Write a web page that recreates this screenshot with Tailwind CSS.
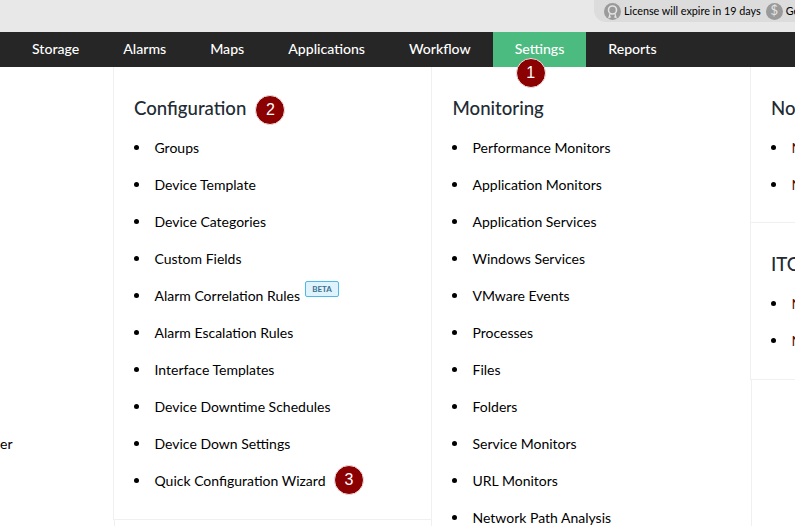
<!DOCTYPE html>
<html>
<head>
<meta charset="utf-8">
<script src="https://cdn.jsdelivr.net/npm/@tailwindcss/browser@4"></script>
</head>
<body class="w-[795px] h-[526px] overflow-hidden bg-white font-['Lato','Liberation_Sans',sans-serif]">
<header class="h-8 bg-[#e8e8e8] flex justify-start pl-[594px] overflow-hidden">
  <div class="h-[22px] w-[300px] shrink-0 rounded-bl-[12px] bg-[#dcdcdc] flex items-center pl-[10px] text-[10.8px] text-black whitespace-nowrap">
    <svg class="w-[17px] h-[17px] shrink-0" viewBox="0 0 17 17"><circle cx="8.5" cy="8.5" r="8.5" fill="#9a9a9a"/><circle cx="8.5" cy="7" r="4" fill="none" stroke="#e4e4e4" stroke-width="1.6"/><path d="M6 11l-1 3.5 2-.8M11 11l1 3.5-2-.8" fill="none" stroke="#e4e4e4" stroke-width="1.2"/></svg>
    <span class="ml-[3px]">License will expire in 19 days</span>
    <span class="ml-[5px] w-[17px] h-[17px] shrink-0 rounded-full bg-[#9a9a9a] text-[#e4e4e4] text-[13px] flex items-center justify-center">$</span>
    <span class="ml-[3px]">Get Quote</span>
  </div>
</header>
<nav class="relative h-[35px] bg-[#262626] flex items-stretch pl-[10px] text-[14.1px] font-medium text-white">
  <a class="px-[22px] flex items-center pb-[2px]">Storage</a>
  <a class="px-[22px] flex items-center pb-[2px]">Alarms</a>
  <a class="px-[22px] flex items-center pb-[2px]">Maps</a>
  <a class="px-[22px] flex items-center pb-[2px]">Applications</a>
  <a class="px-[22px] flex items-center pb-[2px]">Workflow</a>
  <a class="relative px-[22px] flex items-center pb-[2px] bg-[#4cbb7f]">Settings
    <span class="absolute left-[23px] top-[26px] w-[30px] h-[30px] rounded-full bg-[#8b0000] border border-[#f0e4e4] flex items-center justify-center font-['Liberation_Sans',sans-serif] text-[16px] font-normal text-white">1</span>
  </a>
  <a class="px-[22px] flex items-center pb-[2px]">Reports</a>
</nav>
<main class="flex h-[459px] overflow-hidden text-[14px] text-black">
  <section class="w-[113px] shrink-0 overflow-hidden pt-[367px] text-[14px]">
    <p class="leading-[20px]">er</p>
  </section>
  <div class="w-[318px] shrink-0 flex flex-col">
    <section class="h-[453px] shrink-0 border-l border-b border-[#f0f0f0]">
      <div class="flex items-center pl-[20px] pt-[20px] h-[62px]">
        <h2 class="text-[18.6px] font-medium text-[#222b33] leading-[26px]">Configuration</h2>
        <span class="ml-[9px] mt-[3px] w-[30px] h-[30px] rounded-full bg-[#8b0000] border border-[#f0e4e4] flex items-center justify-center font-['Liberation_Sans',sans-serif] text-[16px] text-white">2</span>
      </div>
      <ul class="pl-[20px] flex flex-col">
        <li class="h-[37px] flex items-center"><i class="w-[5px] h-[5px] shrink-0 rounded-full bg-black mr-[15.5px]"></i>Groups</li>
        <li class="h-[37px] flex items-center"><i class="w-[5px] h-[5px] shrink-0 rounded-full bg-black mr-[15.5px]"></i>Device Template</li>
        <li class="h-[37px] flex items-center"><i class="w-[5px] h-[5px] shrink-0 rounded-full bg-black mr-[15.5px]"></i>Device Categories</li>
        <li class="h-[37px] flex items-center"><i class="w-[5px] h-[5px] shrink-0 rounded-full bg-black mr-[15.5px]"></i>Custom Fields</li>
        <li class="h-[37px] flex items-center"><i class="w-[5px] h-[5px] shrink-0 rounded-full bg-black mr-[15.5px]"></i>Alarm Correlation Rules<span class="ml-[5px] mb-[13px] w-[34px] h-[16px] rounded-[2px] bg-[#dff3fc] border border-[#4db8ea] flex items-center justify-center text-[8px] font-bold text-[#3a6f8c]">BETA</span></li>
        <li class="h-[37px] flex items-center"><i class="w-[5px] h-[5px] shrink-0 rounded-full bg-black mr-[15.5px]"></i>Alarm Escalation Rules</li>
        <li class="h-[37px] flex items-center"><i class="w-[5px] h-[5px] shrink-0 rounded-full bg-black mr-[15.5px]"></i>Interface Templates</li>
        <li class="h-[37px] flex items-center"><i class="w-[5px] h-[5px] shrink-0 rounded-full bg-black mr-[15.5px]"></i>Device Downtime Schedules</li>
        <li class="h-[37px] flex items-center"><i class="w-[5px] h-[5px] shrink-0 rounded-full bg-black mr-[15.5px]"></i>Device Down Settings</li>
        <li class="h-[37px] flex items-center"><i class="w-[5px] h-[5px] shrink-0 rounded-full bg-black mr-[15.5px]"></i>Quick Configuration Wizard<span class="ml-[8.5px] mt-[-2px] w-[30px] h-[30px] rounded-full bg-[#8b0000] border border-[#f0e4e4] flex items-center justify-center font-['Liberation_Sans',sans-serif] text-[16px] text-white">3</span></li>
      </ul>
    </section>
    <div class="flex-1 ml-[1px] border-l border-[#f0f0f0]"></div>
  </div>
  <section class="w-[319px] shrink-0 border-l border-[#f0f0f0]">
    <div class="flex items-center pl-[20.5px] pt-[20px] h-[62px]">
      <h2 class="text-[18.6px] font-medium text-[#222b33] leading-[26px]">Monitoring</h2>
    </div>
    <ul class="pl-[20px] flex flex-col">
      <li class="h-[37px] flex items-center"><i class="w-[5px] h-[5px] shrink-0 rounded-full bg-black mr-[15.5px]"></i>Performance Monitors</li>
      <li class="h-[37px] flex items-center"><i class="w-[5px] h-[5px] shrink-0 rounded-full bg-black mr-[15.5px]"></i>Application Monitors</li>
      <li class="h-[37px] flex items-center"><i class="w-[5px] h-[5px] shrink-0 rounded-full bg-black mr-[15.5px]"></i>Application Services</li>
      <li class="h-[37px] flex items-center"><i class="w-[5px] h-[5px] shrink-0 rounded-full bg-black mr-[15.5px]"></i>Windows Services</li>
      <li class="h-[37px] flex items-center"><i class="w-[5px] h-[5px] shrink-0 rounded-full bg-black mr-[15.5px]"></i>VMware Events</li>
      <li class="h-[37px] flex items-center"><i class="w-[5px] h-[5px] shrink-0 rounded-full bg-black mr-[15.5px]"></i>Processes</li>
      <li class="h-[37px] flex items-center"><i class="w-[5px] h-[5px] shrink-0 rounded-full bg-black mr-[15.5px]"></i>Files</li>
      <li class="h-[37px] flex items-center"><i class="w-[5px] h-[5px] shrink-0 rounded-full bg-black mr-[15.5px]"></i>Folders</li>
      <li class="h-[37px] flex items-center"><i class="w-[5px] h-[5px] shrink-0 rounded-full bg-black mr-[15.5px]"></i>Service Monitors</li>
      <li class="h-[37px] flex items-center"><i class="w-[5px] h-[5px] shrink-0 rounded-full bg-black mr-[15.5px]"></i>URL Monitors</li>
      <li class="h-[37px] flex items-center"><i class="w-[5px] h-[5px] shrink-0 rounded-full bg-black mr-[15.5px]"></i>Network Path Analysis</li>
    </ul>
  </section>
  <div class="flex-1 min-w-0 flex flex-col">
    <section class="h-[313px] shrink-0 overflow-hidden border-l border-b border-[#f0f0f0]">
      <div class="h-[156px] border-b border-[#f0f0f0]">
        <div class="flex items-center pl-[20px] pt-[20px] h-[62px]">
          <h2 class="text-[18.6px] font-medium text-[#222b33] leading-[26px] whitespace-nowrap">Notification</h2>
        </div>
        <ul class="pl-[20px] flex flex-col text-[#5a0a0a]">
          <li class="h-[37px] flex items-center whitespace-nowrap"><i class="w-[5px] h-[5px] shrink-0 rounded-full bg-black mr-[15.5px]"></i>N</li>
          <li class="h-[37px] flex items-center whitespace-nowrap"><i class="w-[5px] h-[5px] shrink-0 rounded-full bg-black mr-[15.5px]"></i>N</li>
        </ul>
      </div>
      <div>
        <div class="flex items-center pl-[20px] pt-[20px] h-[62px]">
          <h2 class="text-[18.6px] font-medium text-[#222b33] leading-[26px] whitespace-nowrap">ITOM</h2>
        </div>
        <ul class="pl-[20px] flex flex-col text-[#5a0a0a]">
          <li class="h-[37px] flex items-center whitespace-nowrap"><i class="w-[5px] h-[5px] shrink-0 rounded-full bg-black mr-[15.5px]"></i>N</li>
          <li class="h-[37px] flex items-center whitespace-nowrap"><i class="w-[5px] h-[5px] shrink-0 rounded-full bg-black mr-[15.5px]"></i>N</li>
        </ul>
      </div>
    </section>
    <div class="flex-1 ml-[1px] border-l border-[#f0f0f0]"></div>
  </div>
</main>
</body>
</html>
